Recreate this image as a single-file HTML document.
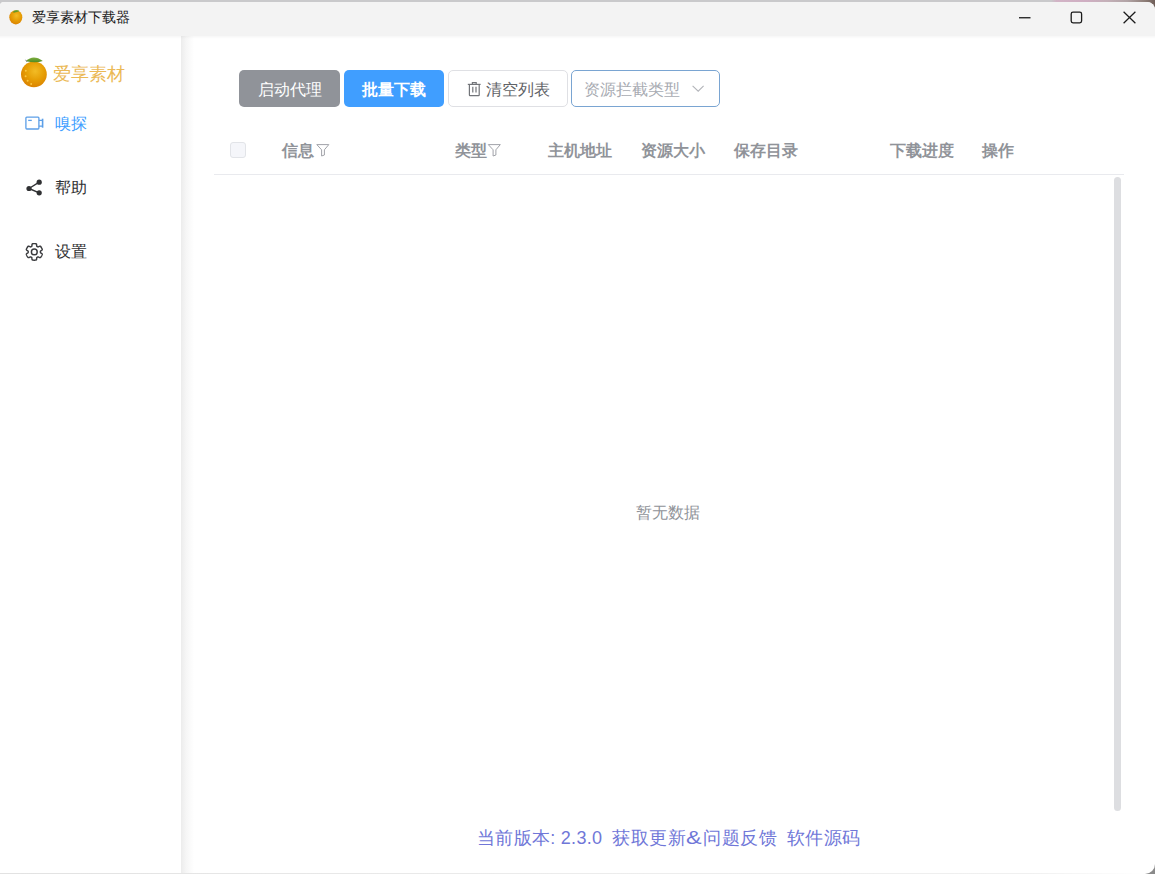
<!DOCTYPE html>
<html><head><meta charset="utf-8">
<style>
*{box-sizing:border-box;margin:0;padding:0}
html,body{width:1155px;height:874px;overflow:hidden;background:#fff;font-family:"Liberation Sans",sans-serif}
.abs{position:absolute}
#outer{position:absolute;left:0;top:0;width:1155px;height:874px;background:#c9c9cb}
#tr{position:absolute;left:1030px;top:0;width:125px;height:14px;background:linear-gradient(90deg,#c9c9cb 0%,#c9c9cb 17%,#d2b4c6 21%,#cfaec2 45%,#c4b0b8 62%,#b2a4a6 78%,#8e7e78 92%,#6f5e58 100%)}
#br{position:absolute;left:1135px;top:855px;width:20px;height:19px;background:#8a8a8a}
#win{position:absolute;left:0;top:2px;width:1155px;height:872px;background:#fff;border-radius:4px 8px 10px 0;overflow:hidden}
#title{position:absolute;left:0;top:2px;width:1155px;height:34px;background:#f3f3f3;border-radius:4px 8px 0 0}
.t{position:absolute;left:31.5px;top:7.5px;font-size:14px;line-height:18px;color:#1a1a1a;font-weight:500}
#shadow{position:absolute;left:181px;top:36px;width:13px;height:838px;background:linear-gradient(90deg,#ececec,#f6f6f6 40%,#fff)}
.btn{position:absolute;top:70px;height:37px;border-radius:5px;font-size:16px;line-height:39px;text-align:center}
.hd{position:absolute;top:141px;font-size:16px;line-height:20px;color:#909399;font-weight:bold}
#botline{position:absolute;left:0;top:873px;width:1144px;height:1px;background:linear-gradient(90deg,#e2e2e2,#ececec 50%,#f0f0f0 90%,rgba(200,200,200,0))}
</style></head><body>
<div id="outer"></div><div id="tr"></div><div id="br"></div>
<div id="win"></div>
<div id="title"></div>
<div class="t">爱享素材下载器</div>
<div id="shadow"></div>
<div class="abs" style="left:0;top:36px;width:1155px;height:3px;background:linear-gradient(180deg,rgba(0,0,0,0.035),rgba(0,0,0,0))"></div>

<!-- sidebar texts -->
<div class="abs" style="left:52.5px;top:62px;font-size:18.2px;line-height:24px;color:#ebb955">爱享素材</div>
<div class="abs" style="left:55px;top:113.5px;font-size:16px;line-height:20px;color:#409eff">嗅探</div>
<div class="abs" style="left:55px;top:178px;font-size:16px;line-height:20px;color:#303133;font-weight:500">帮助</div>
<div class="abs" style="left:55px;top:242px;font-size:16px;line-height:20px;color:#303133;font-weight:500">设置</div>

<!-- toolbar -->
<div class="btn" style="left:239px;width:101px;background:#909399;color:#fff;font-weight:500">启动代理</div>
<div class="btn" style="left:344px;width:100px;background:#409eff;color:#fff;font-weight:bold">批量下载</div>
<div class="btn" style="left:448px;width:120px;background:#fff;border:1px solid #dfe0e4;color:#606266;line-height:37px;text-align:left;padding-left:37px">清空列表</div>
<div class="btn" style="left:571px;width:149px;background:#fff;border:1px solid #7aa5d2;color:#a8abb2;line-height:37px;text-align:left;padding-left:12px">资源拦截类型</div>

<!-- table header -->
<div class="abs" style="left:230px;top:142px;width:16px;height:16px;border:1px solid #e2e4e8;background:#f5f6fa;border-radius:3px"></div>
<div class="hd" style="left:282px">信息</div>
<div class="hd" style="left:455px">类型</div>
<div class="hd" style="left:548px">主机地址</div>
<div class="hd" style="left:641px">资源大小</div>
<div class="hd" style="left:734px">保存目录</div>
<div class="hd" style="left:890px">下载进度</div>
<div class="hd" style="left:982px">操作</div>
<div class="abs" style="left:214px;top:174px;width:910px;height:1px;background:#e9eaee"></div>
<div class="abs" style="left:1114px;top:177px;width:7px;height:634px;border-radius:4px;background:#dddee1"></div>
<div class="abs" style="left:636px;top:503px;font-size:16px;line-height:20px;color:#909399">暂无数据</div>

<!-- footer -->
<div class="abs" style="left:477px;top:825.5px;font-size:18px;line-height:24px;color:#7077d8;letter-spacing:0.3px">当前版本: 2.3.0</div>
<div class="abs" style="left:612px;top:825.5px;font-size:18px;line-height:24px;color:#7077d8;letter-spacing:0.6px">获取更新<span style="display:inline-block;transform:scaleX(1.3);transform-origin:0 0;margin-right:4px">&amp;</span>问题反馈</div>
<div class="abs" style="left:786.5px;top:825.5px;font-size:18px;line-height:24px;color:#7077d8;letter-spacing:0.6px">软件源码</div>

<div id="botline"></div>

<!-- icons -->
<svg class="abs" style="left:0;top:0" width="1155" height="874" viewBox="0 0 1155 874">
  <defs>
    <radialGradient id="og" cx="0.55" cy="0.38" r="0.7">
      <stop offset="0" stop-color="#f2bc25"/>
      <stop offset="0.5" stop-color="#e69e05"/>
      <stop offset="1" stop-color="#d87c00"/>
    </radialGradient>
    <linearGradient id="lf" x1="0" y1="0" x2="0" y2="1">
      <stop offset="0" stop-color="#7fb040"/>
      <stop offset="1" stop-color="#4f8a22"/>
    </linearGradient>
  </defs>
  <!-- title orange -->
  <ellipse cx="15.8" cy="17.3" rx="6.5" ry="7.1" fill="url(#og)"/>
  <path d="M12.6,12.3 Q15.6,8.4 19.6,11 Q16.5,12.8 12.6,12.3Z" fill="url(#lf)"/>
  <!-- window controls -->
  <rect x="1019" y="17.1" width="11.5" height="1.3" fill="#1b1b1b"/>
  <rect x="1071.2" y="12.2" width="10.4" height="10.6" rx="1.8" fill="none" stroke="#1b1b1b" stroke-width="1.3"/>
  <path d="M1123.6,11.8 L1135.4,23.2 M1135.4,11.8 L1123.6,23.2" stroke="#1b1b1b" stroke-width="1.25"/>

  <!-- sidebar orange -->
  <circle cx="33.9" cy="74.3" r="12.9" fill="url(#og)"/>
  <path d="M26,61.2 Q33,53.8 42.8,60.9 Q36,63.4 26,61.2Z" fill="url(#lf)"/>
  <path d="M25.6,59.8 L27,61.8" stroke="#555" stroke-width="0.8"/>
  <g fill="#ffd04a" opacity="0.85">
    <circle cx="25.8" cy="70.8" r="1"/><circle cx="25.6" cy="76.3" r="1"/><circle cx="27.6" cy="80.8" r="1"/><circle cx="31.2" cy="84" r="1"/>
  </g>
  <!-- camera icon -->
  <g fill="none" stroke="#5c9fe8" stroke-width="1.3">
    <rect x="25.9" y="117.1" width="13" height="11.9" rx="0.9"/>
    <path d="M38.9,120.4 H42.2 M38.9,126.1 H42.2"/>
    <path d="M42.6,118.7 V127.7" stroke-width="1.6"/>
    <path d="M28.2,120.4 H31.8"/>
  </g>
  <!-- share icon -->
  <g fill="#303133">
    <circle cx="29" cy="188.5" r="2.6"/>
    <circle cx="39.2" cy="182.2" r="2.6"/>
    <circle cx="39.2" cy="192.8" r="2.6"/>
  </g>
  <path d="M29,188.5 L39.2,182.2 M29,188.5 L39.2,192.8" stroke="#303133" stroke-width="1.4"/>
  <!-- gear icon -->
  <g fill="none" stroke="#3a3b3e" stroke-width="1.45" transform="translate(34.3,251.9)">
    <path id="gear" d="M6.10,-0.00 L6.10,-0.21 L6.09,-0.43 L6.10,-0.64 L6.36,-0.89 L6.81,-1.20 L7.32,-1.56 L7.74,-1.93 L7.94,-2.28 L7.89,-2.56 L7.80,-2.84 L7.70,-3.11 L7.58,-3.38 L7.46,-3.64 L7.33,-3.90 L7.19,-4.15 L7.04,-4.40 L6.88,-4.64 L6.71,-4.88 L6.54,-5.11 L6.36,-5.34 L6.17,-5.55 L5.94,-5.74 L5.54,-5.74 L5.01,-5.56 L4.45,-5.30 L3.95,-5.06 L3.61,-4.97 L3.41,-5.06 L3.23,-5.17 L3.05,-5.28 L2.86,-5.39 L2.67,-5.48 L2.50,-5.61 L2.41,-5.95 L2.37,-6.50 L2.31,-7.12 L2.20,-7.67 L2.00,-8.02 L1.73,-8.12 L1.44,-8.17 L1.16,-8.22 L0.87,-8.25 L0.58,-8.28 L0.29,-8.29 L0.00,-8.30 L-0.29,-8.29 L-0.58,-8.28 L-0.87,-8.25 L-1.16,-8.22 L-1.44,-8.17 L-1.73,-8.12 L-2.00,-8.02 L-2.20,-7.67 L-2.31,-7.12 L-2.37,-6.50 L-2.41,-5.95 L-2.50,-5.61 L-2.67,-5.48 L-2.86,-5.39 L-3.05,-5.28 L-3.23,-5.17 L-3.41,-5.06 L-3.61,-4.97 L-3.95,-5.06 L-4.45,-5.30 L-5.01,-5.56 L-5.54,-5.74 L-5.94,-5.74 L-6.17,-5.55 L-6.36,-5.34 L-6.54,-5.11 L-6.71,-4.88 L-6.88,-4.64 L-7.04,-4.40 L-7.19,-4.15 L-7.33,-3.90 L-7.46,-3.64 L-7.58,-3.38 L-7.70,-3.11 L-7.80,-2.84 L-7.89,-2.56 L-7.94,-2.28 L-7.74,-1.93 L-7.32,-1.56 L-6.81,-1.20 L-6.36,-0.89 L-6.10,-0.64 L-6.09,-0.43 L-6.10,-0.21 L-6.10,-0.00 L-6.10,0.21 L-6.09,0.43 L-6.10,0.64 L-6.36,0.89 L-6.81,1.20 L-7.32,1.56 L-7.74,1.93 L-7.94,2.28 L-7.89,2.56 L-7.80,2.84 L-7.70,3.11 L-7.58,3.38 L-7.46,3.64 L-7.33,3.90 L-7.19,4.15 L-7.04,4.40 L-6.88,4.64 L-6.71,4.88 L-6.54,5.11 L-6.36,5.34 L-6.17,5.55 L-5.94,5.74 L-5.54,5.74 L-5.01,5.56 L-4.45,5.30 L-3.95,5.06 L-3.61,4.97 L-3.41,5.06 L-3.23,5.17 L-3.05,5.28 L-2.86,5.39 L-2.67,5.48 L-2.50,5.61 L-2.41,5.95 L-2.37,6.50 L-2.31,7.12 L-2.20,7.67 L-2.00,8.02 L-1.73,8.12 L-1.44,8.17 L-1.16,8.22 L-0.87,8.25 L-0.58,8.28 L-0.29,8.29 L-0.00,8.30 L0.29,8.29 L0.58,8.28 L0.87,8.25 L1.16,8.22 L1.44,8.17 L1.73,8.12 L2.00,8.02 L2.20,7.67 L2.31,7.12 L2.37,6.50 L2.41,5.95 L2.50,5.61 L2.67,5.48 L2.86,5.39 L3.05,5.28 L3.23,5.17 L3.41,5.06 L3.61,4.97 L3.95,5.06 L4.45,5.30 L5.01,5.56 L5.54,5.74 L5.94,5.74 L6.17,5.55 L6.36,5.34 L6.54,5.11 L6.71,4.88 L6.88,4.64 L7.04,4.40 L7.19,4.15 L7.33,3.90 L7.46,3.64 L7.58,3.38 L7.70,3.11 L7.80,2.84 L7.89,2.56 L7.94,2.28 L7.74,1.93 L7.32,1.56 L6.81,1.20 L6.36,0.89 L6.10,0.64 L6.09,0.43 L6.10,0.21Z" stroke-linejoin="round"/>
    <circle r="2.9"/>
  </g>

  <!-- trash -->
  <g fill="none" stroke="#727479" stroke-width="1.2">
    <path d="M467.8,84.4 H480.6"/>
    <path d="M469.4,84.4 V95 Q469.4,95.6 470,95.6 H478.6 Q479.2,95.6 479.2,95 V84.4"/>
    <path d="M472.4,84.4 V82.6 H476.2 V84.4"/>
    <path d="M472.8,86.8 V92.6 M476,86.8 V92.6"/>
  </g>
  <!-- chevron -->
  <path d="M692.6,85.8 L698.2,91.2 L703.6,85.8" fill="none" stroke="#b2b4b9" stroke-width="1.1"/>
  <!-- funnels -->
  <path d="M316.8,144.6 H328.8 L324.4,149.8 V155 L321.6,156 V149.8 Z" fill="none" stroke="#9c9ea4" stroke-width="0.95" stroke-linejoin="round"/>
  <path d="M488.3,144.6 H500.3 L495.9,149.8 V155 L493.1,156 V149.8 Z" fill="none" stroke="#9c9ea4" stroke-width="0.95" stroke-linejoin="round"/>
</svg>
</body></html>
